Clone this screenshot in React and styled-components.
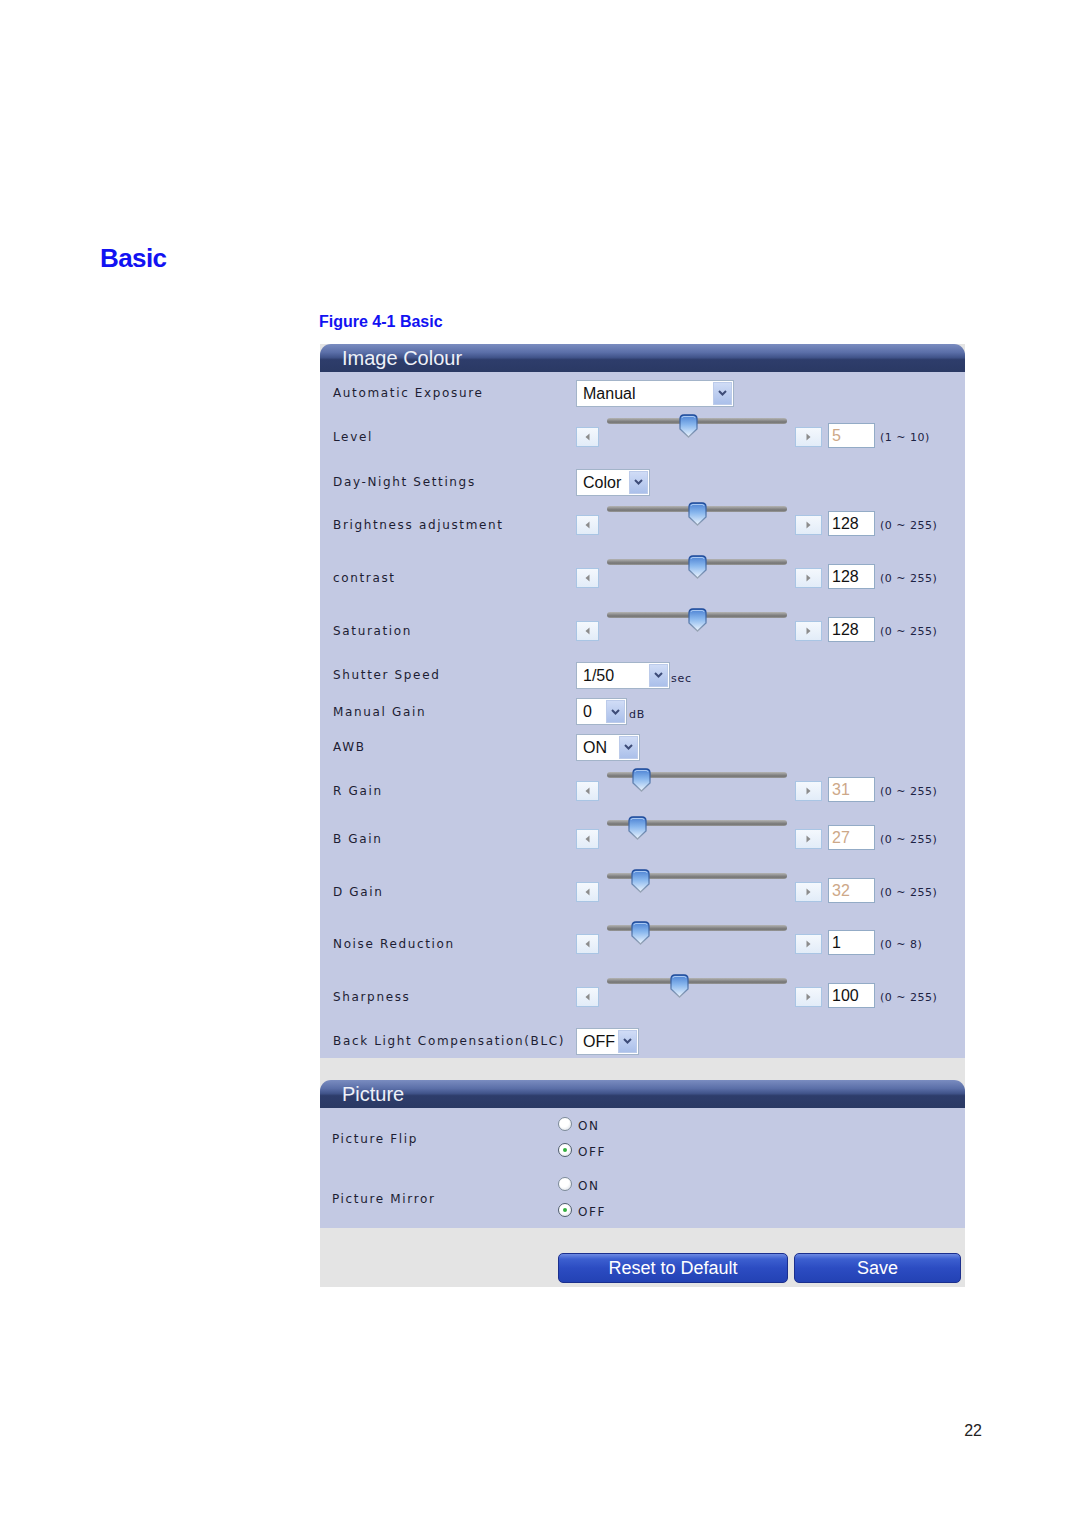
import styled, { createGlobalStyle } from 'styled-components';

const GlobalStyle = createGlobalStyle`
  body {
    margin: 0;
    background: #ffffff;
    font-family: "Liberation Sans", Arial, sans-serif;
  }
`;

const Page = styled.div`
  width: 1080px;
  min-height: 1525px;
  padding-top: 243px;
  box-sizing: border-box;
`;

const Heading = styled.h1`
  margin: 0 0 0 100px;
  font-size: 26px;
  line-height: 30px;
  font-weight: bold;
  letter-spacing: -0.6px;
  color: #1212f2;
`;

const Caption = styled.div`
  margin: 40px 0 0 319px;
  font-size: 16px;
  line-height: 18px;
  font-weight: bold;
  color: #1212f2;
`;

const Panel = styled.div`
  margin: 13px 0 0 320px;
  width: 645px;
  background: #e4e4e4;
`;

const SectionHeader = styled.div`
  height: 28px;
  padding-left: 22px;
  border-radius: 11px 11px 0 0;
  background: linear-gradient(
    #7a8cc0 0%,
    #5b6fa8 30%,
    #41548a 48%,
    #2e3d6b 56%,
    #2a3964 100%
  );
  color: #eef1f8;
  font-size: 20px;
  line-height: 28px;
`;

const SectionBody = styled.div`
  background: #c3c9e3;
  padding: ${(p) => p.$padding};
  display: flex;
  flex-direction: column;
  gap: ${(p) => p.$gap || 0}px;
`;

const Row = styled.div`
  display: grid;
  grid-template-columns: ${(p) => p.$labelWidth}px 1fr;
  align-items: center;
  height: ${(p) => p.$h}px;
`;

const Label = styled.div`
  font-family: "DejaVu Sans", Verdana, sans-serif;
  font-size: 12px;
  letter-spacing: 1.65px;
  color: #1d1d33;
`;

const Controls = styled.div`
  display: flex;
  align-items: center;
`;

// 슬라이더
const ArrowButton = styled.div`
  width: ${(p) => (p.$wide ? 27 : 23)}px;
  height: 20px;
  box-sizing: border-box;
  border: 1px solid #a9c5e4;
  background: linear-gradient(#f4f8fd, #e2ecf8);
  display: flex;
  align-items: center;
  justify-content: center;
  flex: none;
`;

const TrackBox = styled.div`
  position: relative;
  width: 180px;
  height: 40px;
  margin: 0 8px;
  flex: none;
`;

const Track = styled.div`
  margin-top: 1px;
  height: 6px;
  border-radius: 3px;
  background: linear-gradient(#b4b4b4 0%, #8a8a8a 45%, #747474 70%, #9a9a9a 100%);
`;

const Thumb = styled.svg`
  position: absolute;
  top: -3px;
  width: 19px;
  height: 24px;
`;

const ValueBox = styled.div`
  width: 47px;
  height: 25px;
  box-sizing: border-box;
  margin: 0 0 3px 6px;
  padding-left: 3px;
  border: 1px solid #93abc6;
  background: #ffffff;
  font-size: 16px;
  line-height: 23px;
  color: ${(p) => (p.$disabled ? '#cda888' : '#111111')};
  flex: none;
`;

const RangeText = styled.span`
  margin-left: 5px;
  font-family: "DejaVu Sans", Verdana, sans-serif;
  font-size: 11px;
  letter-spacing: 0.5px;
  color: #1c2244;
`;

// 셀렉트
const SelectBox = styled.div`
  display: flex;
  width: ${(p) => p.$w}px;
  height: 27px;
  box-sizing: border-box;
  padding: 1px;
  border: 1px solid #a3b4c9;
  background: #ffffff;
`;

const SelectText = styled.span`
  flex: 1;
  padding-left: 5px;
  font-size: 16px;
  line-height: 23px;
  color: #111111;
`;

const DropButton = styled.span`
  width: 19px;
  box-sizing: border-box;
  border: 1px solid #bccbea;
  background: linear-gradient(#d0dcf6, #abc0ea);
  display: flex;
  align-items: center;
  justify-content: center;
`;

const Suffix = styled.span`
  margin: 6px 0 0 ${(p) => p.$gap}px;
  font-family: "DejaVu Sans", Verdana, sans-serif;
  font-size: 11px;
  letter-spacing: 0.8px;
  color: #1c2244;
`;

// 라디오
const RadioList = styled.div`
  display: flex;
  flex-direction: column;
`;

const RadioItem = styled.div`
  display: flex;
  align-items: center;
  height: 26px;
  gap: 6px;
  margin-left: 1px;
`;

const RadioDot = styled.span`
  width: 14px;
  height: 14px;
  margin-top: -4px;
  box-sizing: border-box;
  border-radius: 50%;
  border: 1px solid ${(p) => (p.$checked ? '#4f5d6c' : '#7d8b99')};
  background: radial-gradient(circle at 40% 35%, #ffffff 0%, #ffffff 45%, #d4d9e0 100%);
  display: flex;
  align-items: center;
  justify-content: center;

  &::after {
    content: '';
    display: ${(p) => (p.$checked ? 'block' : 'none')};
    width: 4px;
    height: 4px;
    border-radius: 50%;
    background: #35b040;
  }
`;

const RadioText = styled.span`
  font-family: "DejaVu Sans", Verdana, sans-serif;
  font-size: 12px;
  letter-spacing: 1.6px;
  color: #1d1d33;
`;

const Spacer = styled.div`
  height: 22px;
`;

const Footer = styled.div`
  height: 59px;
  box-sizing: border-box;
  padding: 25px 4px 0 0;
  display: flex;
  justify-content: flex-end;
  gap: 6px;
`;

const ActionButton = styled.button`
  width: ${(p) => p.$w}px;
  height: 30px;
  border: 1px solid #1b2f8e;
  border-radius: 5px;
  background: linear-gradient(#6d8ae2 0%, #3c5fd0 18%, #2c4cc2 50%, #2342b4 100%);
  color: #ffffff;
  font-family: "Liberation Sans", Arial, sans-serif;
  font-size: 18px;
  line-height: 28px;
  padding: 0;
`;

const PageNumber = styled.div`
  margin-top: 135px;
  padding-right: 98px;
  text-align: right;
  font-size: 16px;
  line-height: 18px;
  color: #222222;
`;

const TRACK_LEFT = 607;

const Chevron = () => (
  <svg width="9" height="6" viewBox="0 0 9 6">
    <path d="M1 1 L4.5 4.5 L8 1" fill="none" stroke="#3d4c78" strokeWidth="2" />
  </svg>
);

const Arrow = ({ dir }) => (
  <svg width="5" height="8" viewBox="0 0 5 8">
    {dir === 'left' ? (
      <path d="M4.5 0.5 L0.5 4 L4.5 7.5 Z" fill="#8c8c8c" />
    ) : (
      <path d="M0.5 0.5 L4.5 4 L0.5 7.5 Z" fill="#8c8c8c" />
    )}
  </svg>
);

const ThumbShape = () => (
  <>
    <defs>
      <linearGradient id="thumbFill" x1="0" y1="0" x2="0" y2="1">
        <stop offset="0" stopColor="#4a80d2" />
        <stop offset="0.45" stopColor="#8ab8ee" />
        <stop offset="1" stopColor="#eef5fd" />
      </linearGradient>
      <linearGradient id="thumbStroke" x1="0" y1="0" x2="0" y2="1">
        <stop offset="0" stopColor="#1d4a9a" />
        <stop offset="0.6" stopColor="#5d7fb0" />
        <stop offset="1" stopColor="#9aa6b6" />
      </linearGradient>
    </defs>
    <path
      d="M1 5 Q1 1 5 1 L14 1 Q18 1 18 5 L18 15 L9.5 23 L1 15 Z"
      fill="url(#thumbFill)"
      stroke="url(#thumbStroke)"
      strokeWidth="1.3"
    />
    <path d="M3 4 Q3 2.5 5 2.5 L14 2.5 Q16 2.5 16 4" fill="none" stroke="#a9c8f2" strokeWidth="1" />
  </>
);

const Slider = ({ thumbX, value, range, disabled }) => (
  <Controls>
    <ArrowButton>
      <Arrow dir="left" />
    </ArrowButton>
    <TrackBox>
      <Track />
      <Thumb viewBox="0 0 19 24" style={{ left: thumbX - TRACK_LEFT - 9.5 }}>
        <ThumbShape />
      </Thumb>
    </TrackBox>
    <ArrowButton $wide>
      <Arrow dir="right" />
    </ArrowButton>
    <ValueBox $disabled={disabled}>{value}</ValueBox>
    <RangeText>{range}</RangeText>
  </Controls>
);

const Select = ({ width, value, suffix, suffixGap = 1 }) => (
  <Controls>
    <SelectBox $w={width}>
      <SelectText>{value}</SelectText>
      <DropButton>
        <Chevron />
      </DropButton>
    </SelectBox>
    {suffix && <Suffix $gap={suffixGap}>{suffix}</Suffix>}
  </Controls>
);

const imageRows = [
  { label: 'Automatic Exposure', h: 42, select: { width: 158, value: 'Manual' } },
  { label: 'Level', h: 46, slider: { thumbX: 688, value: '5', range: '(1 ~ 10)', disabled: true } },
  { label: 'Day-Night Settings', h: 44, select: { width: 74, value: 'Color' } },
  { label: 'Brightness adjustment', h: 42, slider: { thumbX: 697, value: '128', range: '(0 ~ 255)' } },
  { label: 'contrast', h: 64, slider: { thumbX: 697, value: '128', range: '(0 ~ 255)' } },
  { label: 'Saturation', h: 42, slider: { thumbX: 697, value: '128', range: '(0 ~ 255)' } },
  { label: 'Shutter Speed', h: 46, select: { width: 94, value: '1/50', suffix: 'sec' } },
  { label: 'Manual Gain', h: 26, select: { width: 51, value: '0', suffix: 'dB', suffixGap: 2 } },
  { label: 'AWB', h: 46, select: { width: 64, value: 'ON' } },
  { label: 'R Gain', h: 42, slider: { thumbX: 641, value: '31', range: '(0 ~ 255)', disabled: true } },
  { label: 'B Gain', h: 54, slider: { thumbX: 637, value: '27', range: '(0 ~ 255)', disabled: true } },
  { label: 'D Gain', h: 52, slider: { thumbX: 640, value: '32', range: '(0 ~ 255)', disabled: true } },
  { label: 'Noise Reduction', h: 52, slider: { thumbX: 640, value: '1', range: '(0 ~ 8)' } },
  { label: 'Sharpness', h: 54, slider: { thumbX: 679, value: '100', range: '(0 ~ 255)' } },
  { label: 'Back Light Compensation(BLC)', h: 34, select: { width: 63, value: 'OFF' } },
];

const pictureRows = [
  { label: 'Picture Flip', checked: 'OFF' },
  { label: 'Picture Mirror', checked: 'OFF' },
];

const App = () => {
  return (
    <Page>
      <GlobalStyle />
      <Heading>Basic</Heading>
      <Caption>Figure 4-1 Basic</Caption>

      <Panel>
        <SectionHeader>Image Colour</SectionHeader>
        <SectionBody $padding="0 0 0 13px">
          {imageRows.map((row) => (
            <Row key={row.label} $labelWidth={243} $h={row.h}>
              <Label>{row.label}</Label>
              {row.slider ? <Slider {...row.slider} /> : <Select {...row.select} />}
            </Row>
          ))}
        </SectionBody>

        <Spacer />

        <SectionHeader>Picture</SectionHeader>
        <SectionBody $padding="5px 0 3px 12px" $gap={8}>
          {pictureRows.map((row) => (
            <Row key={row.label} $labelWidth={225} $h={52}>
              <Label>{row.label}</Label>
              <RadioList>
                {['ON', 'OFF'].map((opt) => (
                  <RadioItem key={opt}>
                    <RadioDot $checked={row.checked === opt} />
                    <RadioText>{opt}</RadioText>
                  </RadioItem>
                ))}
              </RadioList>
            </Row>
          ))}
        </SectionBody>

        <Footer>
          <ActionButton $w={230}>Reset to Default</ActionButton>
          <ActionButton $w={167}>Save</ActionButton>
        </Footer>
      </Panel>

      <PageNumber>22</PageNumber>
    </Page>
  );
};

export default App;
